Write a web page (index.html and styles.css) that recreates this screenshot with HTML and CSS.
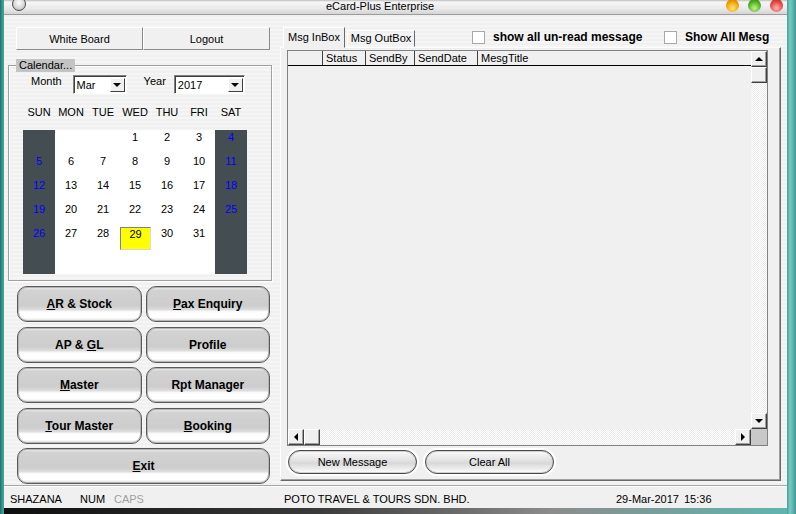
FILE: index.html
```html
<!DOCTYPE html>
<html lang="en">
<head>
    <meta charset="UTF-8">
    <title>eCard-Plus Enterprise</title>
    <link rel="stylesheet" href="styles.css">
</head>
<body>
    <div class="window">
        <div class="titlebar">
            <span class="sysbtn"></span>
            <span class="title">eCard-Plus Enterprise</span>
            <span class="lights">
                <i class="light orange"></i>
                <i class="light green"></i>
                <i class="light red"></i>
            </span>
        </div>

        <div class="frame">
            <div class="left">
                <div class="topbtns">
                    <button class="flatbtn">White Board</button>
                    <button class="flatbtn">Logout</button>
                </div>

                <div class="calbox">
                    <div class="caption">Calendar...</div>
                    <div class="pickers">
                        <span class="lbl">Month</span>
                        <div class="combo month"><span>Mar</span><b class="dd"></b></div>
                        <span class="lbl year-lbl">Year</span>
                        <div class="combo year"><span>2017</span><b class="dd"></b></div>
                    </div>
                    <div class="days">
                        <span>SUN</span><span>MON</span><span>TUE</span><span>WED</span><span>THU</span><span>FRI</span><span>SAT</span>
                    </div>
                    <div class="grid">
                        <div></div><div></div><div></div><div>1</div><div>2</div><div>3</div><div>4</div>
                        <div>5</div><div>6</div><div>7</div><div>8</div><div>9</div><div>10</div><div>11</div>
                        <div>12</div><div>13</div><div>14</div><div>15</div><div>16</div><div>17</div><div>18</div>
                        <div>19</div><div>20</div><div>21</div><div>22</div><div>23</div><div>24</div><div>25</div>
                        <div>26</div><div>27</div><div>28</div><div><span class="today">29</span></div><div>30</div><div>31</div><div></div>
                        <div></div><div></div><div></div><div></div><div></div><div></div><div></div>
                    </div>
                </div>

                <div class="menu">
                    <button class="menubtn"><u>A</u>R &amp; Stock</button>
                    <button class="menubtn"><u>P</u>ax Enquiry</button>
                    <button class="menubtn">AP &amp; <u>G</u>L</button>
                    <button class="menubtn">Profile</button>
                    <button class="menubtn"><u>M</u>aster</button>
                    <button class="menubtn">Rpt Manager</button>
                    <button class="menubtn"><u>T</u>our Master</button>
                    <button class="menubtn"><u>B</u>ooking</button>
                    <button class="menubtn wide"><u>E</u>xit</button>
                </div>
            </div>

            <div class="right">
                <div class="tabrow">
                    <span class="tab active">Msg InBox</span>
                    <span class="tab">Msg OutBox</span>
                    <label class="chk first"><i class="box"></i>show all un-read message</label>
                    <label class="chk"><i class="box"></i>Show All Mesg</label>
                </div>

                <div class="panel">
                    <div class="listview">
                        <div class="lvmain">
                            <div class="lvhead">
                                <span class="c0"></span>
                                <span class="c1">Status</span>
                                <span class="c2">SendBy</span>
                                <span class="c3">SendDate</span>
                                <span class="c4">MesgTitle</span>
                            </div>
                        </div>
                        <div class="vscroll">
                            <span class="sbtn up"></span>
                            <span class="sbtn"></span>
                            <span class="track"></span>
                            <span class="sbtn down"></span>
                        </div>
                        <div class="hscroll">
                            <span class="sbtn lt"></span>
                            <span class="sbtn"></span>
                            <span class="track"></span>
                            <span class="sbtn rt"></span>
                        </div>
                        <div class="corner"></div>
                    </div>

                    <div class="actions">
                        <button class="pill">New Message</button>
                        <button class="pill">Clear All</button>
                    </div>
                </div>
            </div>
        </div>

        <div class="statusbar">
            <span class="s-user">SHAZANA</span>
            <span class="s-num">NUM</span>
            <span class="s-caps">CAPS</span>
            <span class="s-co">POTO TRAVEL &amp; TOURS SDN. BHD.</span>
            <span class="s-date">29-Mar-2017</span>
            <span>15:36</span>
        </div>
    </div>
    <div class="desk"></div>
</body>
</html>
```

FILE: styles.css
```css
* {
    box-sizing: border-box;
}

body {
    margin: 0;
    width: 796px;
    height: 514px;
    overflow: hidden;
    background: linear-gradient(to right, #236f6a 0, #3fa39c 3px, #3fa39c 787px, #7cc9c2 790px, #3b9b94 796px);
    font-family: "Liberation Sans", Arial, sans-serif;
    font-size: 11px;
    color: #000;
}

button {
    font-family: inherit;
    color: #000;
    padding: 0;
    cursor: pointer;
}

.window {
    margin-left: 4px;
    width: 783px;
    height: 508px;
    display: flex;
    flex-direction: column;
    background: #f0f0f0;
}

/* title bar */
.titlebar {
    height: 15px;
    flex-shrink: 0;
    display: flex;
    background: linear-gradient(#bdbdbd 0, #f6f6f6 2px, #e8e8e8 9px, #d4d4d4 14px);
    border-bottom: 1px solid #9c9c9c;
}

.sysbtn {
    width: 14px;
    height: 14px;
    margin: -3px 0 0 8px;
    flex-shrink: 0;
    border-radius: 50%;
    border: 1px solid #4a4a4a;
    background: radial-gradient(circle at 50% 40%, #fff, #d0d0d0 65%, #9a9a9a);
}

.title {
    margin-left: 300px;
    line-height: 13px;
}

.lights {
    margin: -1px 4px 0 auto;
    display: flex;
    gap: 9px;
}

.light {
    width: 13px;
    height: 13px;
    border-radius: 50%;
}

.orange { background: radial-gradient(circle at 50% 70%, #ffe680, #f2a400 55%, #b86a00); }
.green  { background: radial-gradient(circle at 50% 70%, #caf28a, #52b424 55%, #2a7410); }
.red    { background: radial-gradient(circle at 50% 70%, #ffb8b0, #e84a44 55%, #a41c1c); }

/* main area */
.frame {
    height: 470px;
    flex-shrink: 0;
    display: flex;
    background: repeating-linear-gradient(#f0f0f0 0 2px, #f5f5f5 2px 4px);
}

.left {
    width: 264px;
    margin-left: 4px;
    display: flex;
    flex-direction: column;
}

.topbtns {
    display: flex;
    width: 254px;
    height: 23px;
    margin: 12px 0 0 8px;
}

.flatbtn {
    flex: 1;
    font-size: 11px;
    background: #f0f0f0;
    border: 1px solid;
    border-color: #fff #8a8a8a #8a8a8a #fff;
}

.calbox {
    margin-top: 15px;
    height: 216px;
    border: 1px solid #a0a0a0;
    box-shadow: inset 1px 1px 0 #fff, 1px 1px 0 #fff;
    display: flex;
    flex-direction: column;
}

.caption {
    align-self: flex-start;
    margin: -7px 0 0 7px;
    padding: 0 3px;
    height: 13px;
    line-height: 13px;
    background: #c4c4c4;
}

.pickers {
    display: flex;
    align-items: flex-start;
    margin: 3px 0 0 22px;
}

.lbl {
    line-height: 13px;
}

.combo {
    height: 19px;
    display: flex;
    background: #fff;
    border: 1px solid;
    border-color: #808080 #fff #fff #808080;
    box-shadow: inset 1px 1px 0 #404040;
    padding: 2px 1px 1px 2px;
}

.combo span {
    flex: 1;
    line-height: 15px;
    padding-left: 1px;
}

.month { margin-left: 11px; width: 54px; }
.year-lbl { margin-left: 17px; }
.year { margin-left: 8px; width: 71px; }

.dd {
    width: 15px;
    background: #f0f0f0;
    border: 1px solid;
    border-color: #fff #404040 #404040 #fff;
    display: flex;
    align-items: center;
    justify-content: center;
}

.dd::after {
    content: "";
    border-left: 4px solid transparent;
    border-right: 4px solid transparent;
    border-top: 4px solid #000;
}

.days,
.grid {
    display: grid;
    grid-template-columns: repeat(7, 32px);
    margin: 11px 0 0 14px;
    text-align: center;
    line-height: 14px;
}

.grid {
    width: 224px;
    grid-auto-rows: 24px;
    background: linear-gradient(to right, #434d52 32px, #fff 32px, #fff 192px, #434d52 192px);
}

.grid div:nth-child(7n+1),
.grid div:nth-child(7n) {
    color: #0000ff;
}

.today {
    display: block;
    height: 23px;
    margin: 1px 0 0 1px;
    line-height: 12px;
    background: #ffff00;
    border: 1px solid;
    border-color: #808080 #d8d8d8 #d8d8d8 #808080;
}

.menu {
    display: grid;
    grid-template-columns: 1fr 1fr;
    grid-auto-rows: 36px;
    gap: 4.5px 4px;
    width: 253px;
    margin: 5px 0 0 9px;
}

.menubtn {
    font-size: 12px;
    font-weight: bold;
    border-radius: 10px;
    border: 1px solid #5a5a5a;
    background: linear-gradient(#eeeeee 0, #d2d2d2 10%, #cdcdcd 55%, #dcdcdc 66%, #fdfdfd 73%, #fff 90%, #dadada 100%);
    box-shadow: inset 0 0 0 1px #b4b4b4;
}

.menubtn.wide {
    grid-column: span 2;
}

/* message panel */
.right {
    width: 501px;
    margin-left: 8px;
    display: flex;
    flex-direction: column;
}

.tabrow {
    display: flex;
    align-items: flex-end;
    height: 20px;
    margin-top: 12px;
    padding-left: 3px;
    position: relative;
    z-index: 1;
}

.tab {
    width: 68px;
    height: 17px;
    margin-left: 2px;
    text-align: center;
    line-height: 15px;
    border: 1px solid;
    border-color: #fff #696969 transparent #fff;
}

.tab.active {
    width: 62px;
    height: 21px;
    margin: 0 0 -1px 0;
    line-height: 19px;
    background: #f0f0f0;
}

.chk {
    align-self: flex-start;
    display: flex;
    align-items: center;
    margin-top: 4px;
    font-size: 12px;
    font-weight: bold;
    line-height: 13px;
}

.chk.first {
    width: 192px;
    margin-left: 57px;
}

.box {
    width: 13px;
    height: 13px;
    margin-right: 8px;
    background: #fff;
    border: 1px solid #a8a8a8;
}

.panel {
    height: 434px;
    padding: 2px 0 0 6px;
    background: #f0f0f0;
    border: 1px solid;
    border-color: #fff #696969 #696969 #fff;
    box-shadow: inset -1px -1px 0 #a0a0a0;
}

.listview {
    width: 481px;
    height: 396px;
    border: 1px solid #828282;
    display: grid;
    grid-template-columns: 1fr 16px;
    grid-template-rows: 1fr 16px;
}

.lvhead {
    display: flex;
    height: 15px;
    line-height: 14px;
    border-bottom: 1px solid #000;
}

.lvhead span {
    padding-left: 3px;
    border-right: 1px solid #404040;
}

.c0 { width: 35px; }
.c1 { width: 43px; }
.c2 { width: 49px; }
.c3 { width: 63px; }
.lvhead .c4 { flex: 1; border-right: none; }

.vscroll,
.hscroll {
    display: flex;
}

.vscroll { flex-direction: column; }

.sbtn {
    width: 16px;
    height: 16px;
    flex-shrink: 0;
    display: flex;
    align-items: center;
    justify-content: center;
    background: #f0f0f0;
    border: 1px solid;
    border-color: #fff #404040 #404040 #fff;
    box-shadow: inset -1px -1px 0 #a0a0a0;
}

.track {
    flex: 1;
    background: repeating-conic-gradient(#fff 0 25%, #ececec 0 50%) 0 0 / 2px 2px;
}

.up::after,
.down::after,
.lt::after,
.rt::after {
    content: "";
    border: 4px solid transparent;
}

.up::after   { border-bottom-color: #000; border-top-width: 0; }
.down::after { border-top-color: #000; border-bottom-width: 0; }
.lt::after   { border-right-color: #000; border-left-width: 0; }
.rt::after   { border-left-color: #000; border-right-width: 0; }

.corner {
    background: #c8c8c8;
}

.actions {
    display: flex;
    gap: 8px;
    margin: 4px 0 0 1px;
}

.pill {
    width: 129px;
    height: 24px;
    font-size: 11px;
    border-radius: 12px;
    border: 1px solid #4a4a4a;
    background: linear-gradient(#fafafa, #e4e4e4 40%, #d8d8d8 55%, #ececec 80%, #fff);
    box-shadow: inset 0 0 0 1px #cfcfcf, 0 0 0 2px #fff;
}

/* status bar */
.statusbar {
    height: 23px;
    flex-shrink: 0;
    display: flex;
    align-items: center;
    padding: 3px 0 0 6px;
    border-top: 1px solid #a8a8a8;
    box-shadow: inset 0 1px 0 #fff;
}

.s-user { width: 70px; }
.s-num  { width: 34px; }
.s-caps { width: 170px; color: #a0a0a0; }
.s-co   { width: 332px; }
.s-date { width: 68px; }

.desk {
    margin-left: 4px;
    width: 783px;
    height: 6px;
    background: linear-gradient(to right, #0e0e0e, #3a3a3a 40%, #8c8c8c 70%, #5fb5ad);
}
```
